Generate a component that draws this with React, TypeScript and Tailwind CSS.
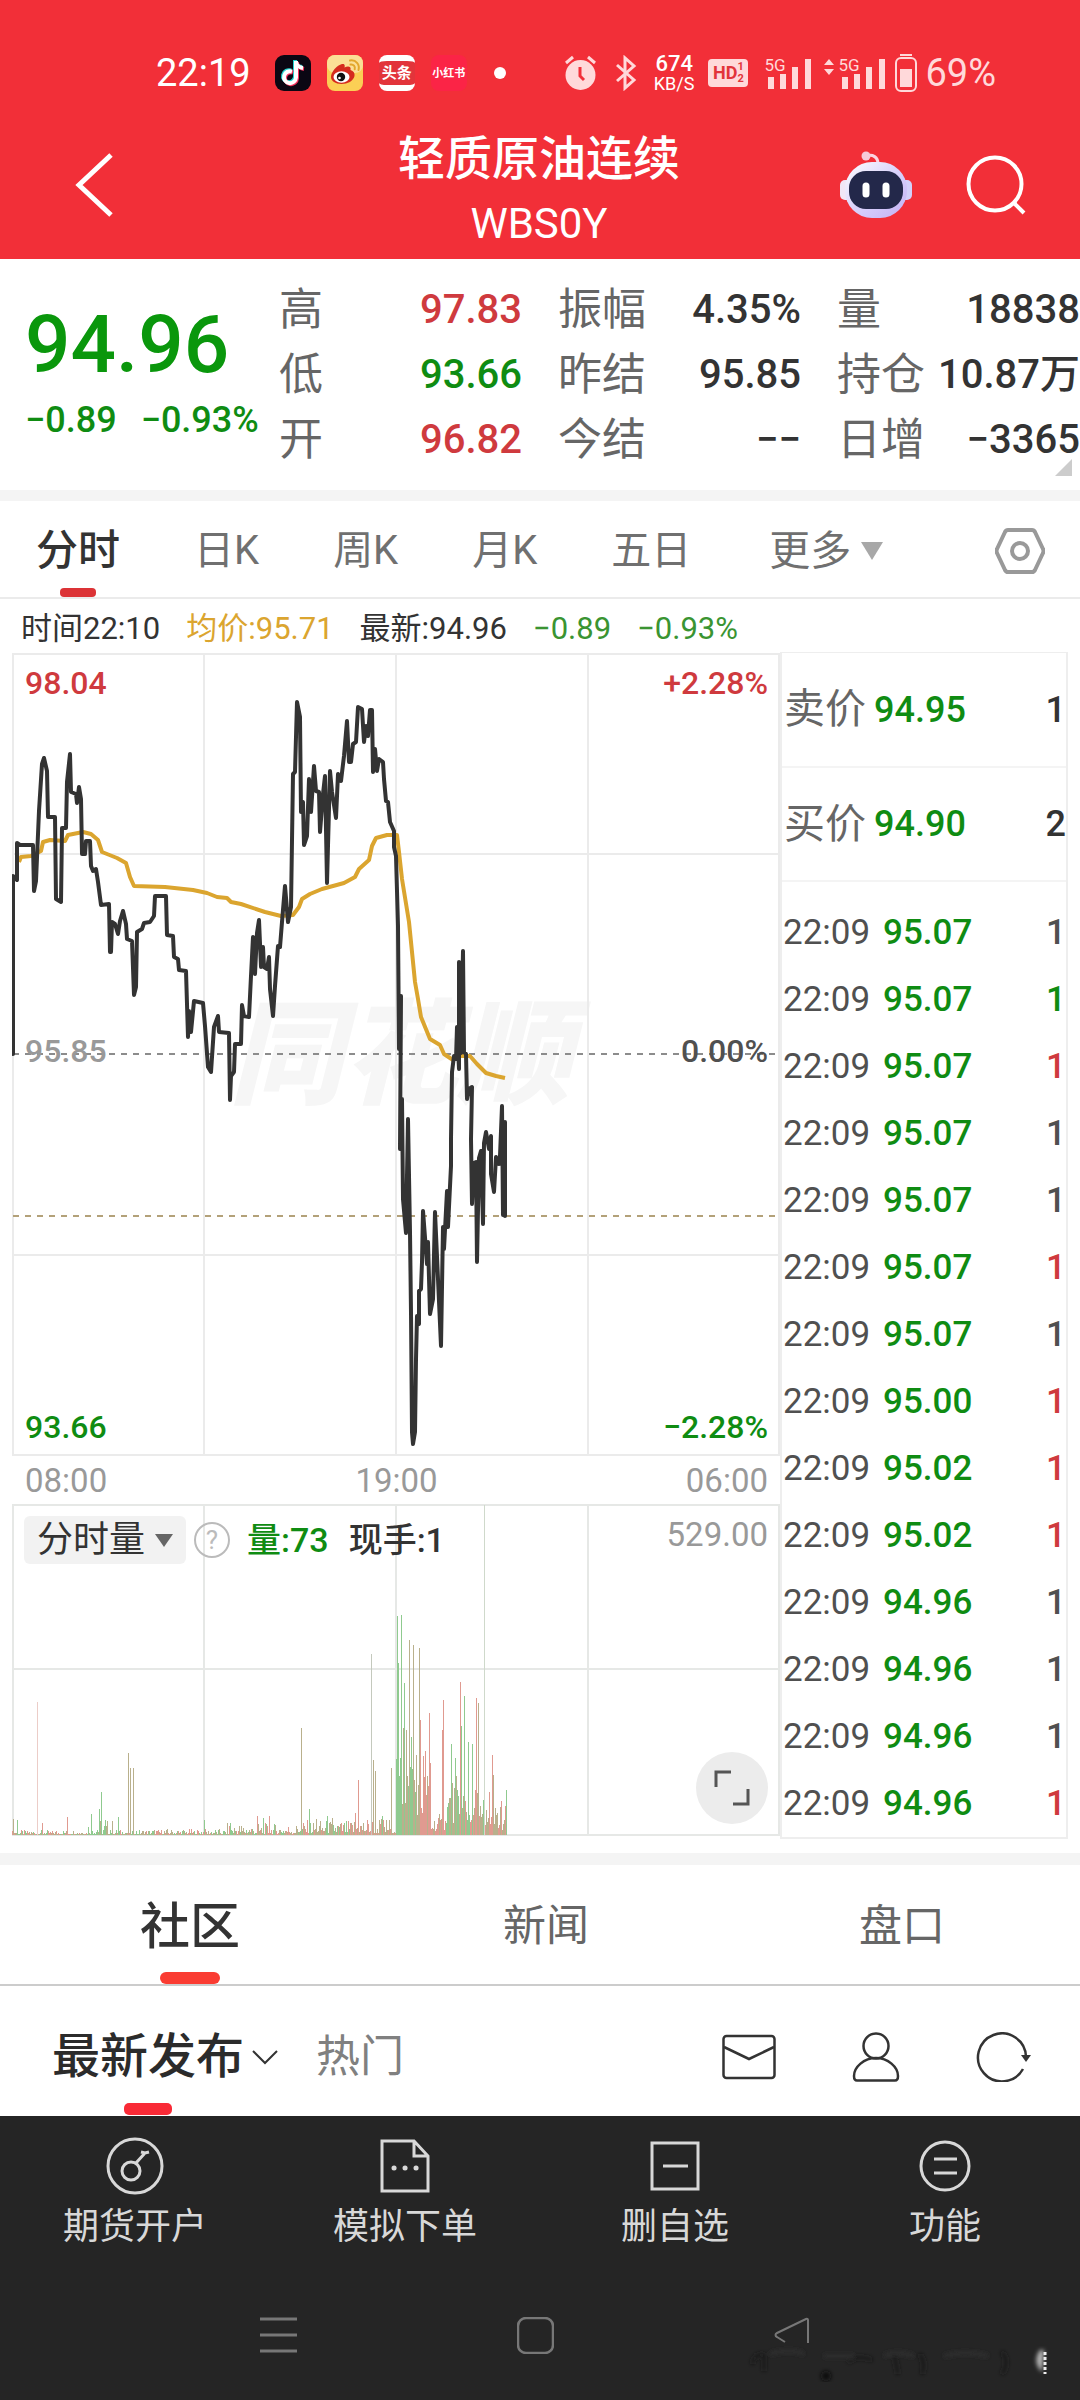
// src/pages/Quote/FuturesQuotePage.tsx

import React, { useState } from "react";

interface Stat {
  label: string;
  value: string;
  color: string;
}

interface Tick {
  time: string;
  price: string;
  volume: number;
  color: string;
}

const UP = "text-[#cf3a3e]";
const DOWN = "text-[#0f8c12]";
const FLAT = "text-[#333333]";
const GREY = "text-[#505050]";

const STATS: Stat[][] = [
  [
    { label: "高", value: "97.83", color: UP },
    { label: "低", value: "93.66", color: DOWN },
    { label: "开", value: "96.82", color: UP },
  ],
  [
    { label: "振幅", value: "4.35%", color: FLAT },
    { label: "昨结", value: "95.85", color: FLAT },
    { label: "今结", value: "−−", color: FLAT },
  ],
  [
    { label: "量", value: "18838", color: FLAT },
    { label: "持仓", value: "10.87万", color: FLAT },
    { label: "日增", value: "−3365", color: FLAT },
  ],
];

const TICKS: Tick[] = [
  { time: "22:09", price: "95.07", volume: 1, color: GREY },
  { time: "22:09", price: "95.07", volume: 1, color: DOWN },
  { time: "22:09", price: "95.07", volume: 1, color: UP },
  { time: "22:09", price: "95.07", volume: 1, color: GREY },
  { time: "22:09", price: "95.07", volume: 1, color: GREY },
  { time: "22:09", price: "95.07", volume: 1, color: UP },
  { time: "22:09", price: "95.07", volume: 1, color: GREY },
  { time: "22:09", price: "95.00", volume: 1, color: UP },
  { time: "22:09", price: "95.02", volume: 1, color: UP },
  { time: "22:09", price: "95.02", volume: 1, color: UP },
  { time: "22:09", price: "94.96", volume: 1, color: GREY },
  { time: "22:09", price: "94.96", volume: 1, color: GREY },
  { time: "22:09", price: "94.96", volume: 1, color: GREY },
  { time: "22:09", price: "94.96", volume: 1, color: UP },
];

const PERIODS = ["分时", "日K", "周K", "月K", "五日"];

const PRICE_LINE =
  "1,401 1,223 5,227 5,190 8,192 21,192 22,238 24,228 27,158 30,111 32,105 35,118 36,164 43,164 44,246 49,249 50,175 54,175 55,129 58,101 59,139 64,141 65,150 67,134 69,146 70,201 73,201 74,188 78,188 79,213 81,218 84,216 86,229 89,252 97,251 98,299 99,299 100,269 103,271 106,281 108,268 111,258 114,271 115,286 120,288 122,342 124,334 125,279 130,276 132,270 138,269 142,263 143,243 154,243 155,282 161,283 162,304 166,306 167,317 174,318 176,384 177,358 179,379 182,348 191,350 193,373 196,414 199,419 202,374 206,363 207,379 217,380 218,447 219,423 222,419 223,391 229,391 230,352 232,363 237,364 239,323 241,284 243,321 245,280 247,267 249,314 251,294 252,314 255,316 257,304 258,336 261,363 263,333 266,293 268,294 270,269 273,233 276,269 279,254 281,121 283,119 285,49 288,64 289,159 291,149 292,192 295,183 297,126 299,159 302,113 304,138 307,139 308,179 311,141 313,123 315,230 318,118 320,139 324,165 326,121 329,128 332,103 335,68 337,109 339,109 341,91 344,89 346,54 350,56 352,89 354,73 356,83 358,57 360,57 361,119 363,96 365,118 367,106 371,109 372,126 374,148 376,149 378,169 382,178 382,194 384,203 386,273 387,396 389,343 388,496 390,446 391,546 394,580 396,466 398,579 399,659 400,779 401,791 403,779 404,706 405,663 407,671 407,638 409,636 410,609 411,558 415,611 416,589 418,661 421,646 423,559 426,626 429,693 431,574 432,596 435,538 436,574 439,513 439,486 440,419 442,403 444,406 445,374 447,416 447,309 449,400 451,298 452,399 454,401 455,446 457,436 460,434 459,486 460,551 462,510 464,509 465,609 467,505 469,498 471,571 472,490 474,479 477,496 479,483 479,521 482,539 484,504 487,511 488,503 490,453 491,562 493,469 493,563";

const AVG_LINE =
  "7,209 9,204 19,203 29,198 31,189 38,187 53,188 56,182 71,179 79,181 86,187 90,199 105,205 114,210 118,224 122,233 153,234 181,237 195,240 205,244 215,245 219,249 229,251 253,259 269,263 281,262 287,254 290,246 298,241 310,236 332,230 343,224 347,216 357,207 360,193 364,185 375,182 385,182 387,199 390,226 397,269 401,309 403,329 406,346 409,364 418,386 428,392 432,401 441,407 446,403 458,403 465,411 474,420 484,423 493,425";

type Bar = [number, number, string];

const G = "#8fca8f";
const R = "#e09a90";
const T = "#b9b08c";

const SPIKES: Bar[] = [
  [1, 16, T], [5, 15, G], [25, 133, "#eccdc8"], [30, 12, R], [55, 18, R], [79, 21, G], [87, 26, G], [89, 43, G],
  [93, 15, G], [106, 18, G], [116, 82, T], [118, 67, T], [121, 67, T], [192, 15, G], [218, 12, G], [245, 19, R],
  [251, 17, G], [257, 19, R], [289, 107, T], [297, 26, G], [304, 16, T], [315, 19, G], [320, 17, T], [343, 22, R],
  [346, 55, R], [359, 181, "#c4c9bd"], [361, 75, T], [363, 64, T], [370, 19, G], [379, 67, T], [385, 219, G],
  [386, 172, G], [389, 220, G], [391, 107, T], [392, 152, G], [394, 105, T], [397, 195, T], [399, 98, G],
  [401, 190, T], [404, 80, T], [407, 187, T], [408, 115, R], [411, 79, R], [413, 84, R], [417, 122, R],
  [418, 72, R], [430, 105, R], [431, 135, R], [439, 91, G], [443, 77, G], [448, 153, R], [449, 109, G],
  [452, 139, G], [456, 93, G], [460, 91, G], [464, 137, R], [466, 132, T], [471, 35, G], [472, 330, "#cfd9cb"],
  [477, 43, R], [480, 80, R], [481, 60, T], [489, 34, R], [494, 45, G],
];

// [from, to, min height, max height, colours]
const BANDS: [number, number, number, number, string[]][] = [
  [0, 75, 1, 5, [T, R, G]],
  [75, 102, 1, 16, [G, G, T]],
  [102, 215, 1, 6, [G, R, T]],
  [215, 285, 1, 12, [R, T, G]],
  [285, 340, 2, 15, [G, T, R]],
  [340, 384, 2, 18, [T, R, T]],
  [384, 404, 28, 100, [G, T, T]],
  [404, 419, 20, 70, [R, T, R]],
  [419, 434, 4, 22, [R, R, T]],
  [434, 446, 12, 60, [G, T, T]],
  [446, 458, 12, 60, [G, T, R]],
  [458, 469, 12, 50, [R, T, T]],
  [469, 494, 4, 32, [R, T, T]],
];

const noise = (n: number) => {
  const v = Math.sin(n * 12.9898) * 43758.5453;
  return v - Math.floor(v);
};

const buildBars = (): Bar[] => {
  const bars: Bar[] = [];
  BANDS.forEach(([from, to, min, max, colors]) => {
    for (let x = from; x < to; x++) {
      const h = min + (max - min) * Math.pow(noise(x + 1), 2);
      bars.push([x, Math.round(h), colors[Math.floor(noise(x + 500) * 3)]]);
    }
  });
  return [...bars, ...SPIKES];
};

const BARS = buildBars();

const SignalBars: React.FC = () => (
  <div className="relative h-8 w-12">
    <span className="absolute left-0 top-0 text-[17px] leading-none">5G</span>
    <svg className="h-8 w-12" viewBox="0 0 48 32">
      <path d="M4 20h6v12H4zM16 17h6v15h-6zM28 10h6v22h-6zM41 2h6v30h-6z" fill="currentColor" />
    </svg>
  </div>
);

const StatusBar: React.FC = () => (
  <div className="flex items-center justify-between h-12 pl-[156px] pr-[84px]">
    <div className="flex items-center">
      <span className="text-[38px] leading-none">22:19</span>
      <svg className="ml-6 size-9" viewBox="0 0 36 36">
        <rect width="36" height="36" rx="9" fill="#0b0713" />
        <g fill="none" strokeWidth="4">
          <path d="M16 15.500a6 6 0 1 0 4 6V5c0 3.500 3 6.500 7 7" stroke="#25d4d0" />
          <path d="M18 17.500a6 6 0 1 0 4 6V7c0 3.500 3 6.500 7 7" stroke="#f5315c" />
          <path d="M17 16.500a6 6 0 1 0 4 6V6c0 3.500 3 6.500 7 7" stroke="#fff" />
        </g>
      </svg>
      <svg className="ml-4 size-9" viewBox="0 0 36 36">
        <rect width="36" height="36" rx="8" fill="#fbcf55" />
        <rect width="36" height="18" rx="8" fill="#fbdf96" />
        <path d="M4 22c0-5 6-12 11-13 3-.5 3 2 2.500 3.500 3-1.500 7-1.500 6 2.500 3 1 4.500 3 4 6-1 5-7 8-13 8S4 26 4 22Z" fill="#d52b1e" />
        <ellipse cx="14.500" cy="22" rx="8" ry="5.800" fill="#fff" />
        <circle cx="14" cy="22" r="4.200" fill="#111" />
        <circle cx="12.500" cy="23" r="1.300" fill="#fff" />
        <path d="M23 5.500c6-1 10 4 8.500 9.500M23.500 9.500c3-.5 5 2 4.200 4.800" fill="none" stroke="#e3a72c" strokeWidth="2" strokeLinecap="round" />
      </svg>
      <span className="ml-4 flex size-9 items-center justify-center overflow-hidden rounded-lg border-y-[6px] border-white bg-[#e2343b] text-[15px] font-bold leading-none">
        头条
      </span>
      <span className="ml-4 flex size-9 items-center justify-center rounded-lg bg-[#fb2446] text-[11px] font-bold leading-none">
        小红书
      </span>
      <span className="ml-[27px] size-3 rounded-full bg-white" />
    </div>
    <div className="flex items-center text-[#ffd9da]">
      <svg className="w-[33px] h-[36px]" viewBox="0 0 33 36">
        <circle cx="16.500" cy="20" r="15" fill="currentColor" />
        <path d="M2 8 9 2M24 2l7 6" stroke="currentColor" strokeWidth="3" />
        <path d="M16 12v9l4 4" fill="none" stroke="#f22f38" strokeWidth="3" />
      </svg>
      <svg className="ml-[17px] w-[24px] h-[36px]" viewBox="0 0 24 36">
        <path d="m3 10 17 15-9 8V3l9 8L3 26" fill="none" stroke="currentColor" strokeWidth="3" />
      </svg>
      <div className="ml-4 flex flex-col items-center text-white">
        <span className="text-[22px] leading-[22px] font-medium">674</span>
        <span className="text-[18px] leading-[18px]">KB/S</span>
      </div>
      <div className="ml-[14px] flex h-7 w-10 items-center justify-center rounded-[4px] bg-[#ffd9da] text-[#e2343b]">
        <span className="text-[18px] leading-none font-bold">HD</span>
        <span className="flex flex-col text-[11px] leading-[12px] font-bold">
          <span>1</span>
          <span>2</span>
        </span>
      </div>
      <div className="ml-4">
        <SignalBars />
      </div>
      <svg className="ml-3 mb-3 h-4 w-[10px]" viewBox="0 0 10 16">
        <path d="m5 0 5 6H0zM5 16l5-6H0z" fill="currentColor" />
      </svg>
      <div className="ml-1">
        <SignalBars />
      </div>
      <svg className="ml-[9px] h-10 w-[22px]" viewBox="0 0 22 40">
        <path d="M5 1h12v2H5z" fill="currentColor" />
        <rect x="1" y="5" width="20" height="33" rx="5" fill="none" stroke="currentColor" strokeWidth="2" />
        <rect x="5" y="16" width="12" height="18" fill="currentColor" />
      </svg>
      <span className="ml-2 text-[38px] leading-none">69%</span>
    </div>
  </div>
);

const Header: React.FC = () => (
  <header className="bg-[#f22f38] pt-[49px] pb-2 text-white">
    <StatusBar />
    <div className="mt-[32px] flex items-center justify-between pl-[75px] pr-[54px]">
      <button aria-label="返回" className="w-[163px] pb-[10px]">
        <svg className="h-[66px] w-[38px]" viewBox="0 0 38 66">
          <path d="M36 3 4 33l32 30" fill="none" stroke="currentColor" strokeWidth="5" />
        </svg>
      </button>
      <div className="flex flex-col items-center">
        <h1 className="text-[47px] leading-[60px] font-medium">轻质原油连续</h1>
        <p className="mt-2 text-[42px] leading-[54px]">WBS0Y</p>
      </div>
      <div className="flex items-center gap-[54px] pb-[10px]">
        <button aria-label="智能助手">
          <svg className="h-[68px] w-[72px]" viewBox="0 0 72 68">
            <defs>
              <linearGradient id="shell" x1="0" y1="0" x2="1" y2="1">
                <stop offset="0" stopColor="#fff" />
                <stop offset="0.5" stopColor="#d9d2fb" />
                <stop offset="1" stopColor="#c3b0f5" />
              </linearGradient>
            </defs>
            <path d="M26 5c7-2 12 1 12 8" fill="none" stroke="#fbd5e2" strokeWidth="3" />
            <circle cx="26" cy="5" r="4.500" fill="#f6cadb" />
            <rect x="0" y="29" width="12" height="20" rx="5" fill="#f1e6f6" />
            <rect x="60" y="29" width="12" height="20" rx="5" fill="#d3d0fa" />
            <rect x="5" y="11" width="62" height="56" rx="27" fill="url(#shell)" />
            <rect x="9" y="20" width="54" height="38" rx="17" fill="#23284a" />
            <path d="M26 35v8M46 35v8" stroke="#fff" strokeWidth="7" strokeLinecap="round" />
          </svg>
        </button>
        <button aria-label="搜索">
          <svg className="h-[60px] w-[60px]" viewBox="0 0 60 60">
            <circle cx="29" cy="29" r="26.500" fill="none" stroke="currentColor" strokeWidth="4" />
            <path d="m47 47 11 11" stroke="currentColor" strokeWidth="4" />
          </svg>
        </button>
      </div>
    </div>
  </header>
);

const Summary: React.FC = () => (
  <section className="relative flex pt-[18px] pb-[18px]">
    <div className="w-[279px] pl-[25px] pt-8">
      <p className="text-[80px] leading-[72px] font-medium text-[#0a970c]">94.96</p>
      <p className={`mt-[17px] flex gap-6 text-[36px] leading-[44px] font-medium whitespace-nowrap ${DOWN}`}>
        <span>−0.89</span>
        <span>−0.93%</span>
      </p>
    </div>
    <div className="grid flex-1 grid-cols-3 gap-x-9">
      {STATS.map((column) => (
        <dl key={column[0].label}>
          {column.map((s) => (
            <div key={s.label} className="flex h-[65px] items-center justify-between">
              <dt className="text-[44px] leading-none text-[#666666]">{s.label}</dt>
              <dd className={`text-[40px] leading-none font-medium whitespace-nowrap ${s.color}`}>{s.value}</dd>
            </div>
          ))}
        </dl>
      ))}
    </div>
    <svg className="absolute right-2 bottom-[14px] size-[17px]" viewBox="0 0 17 17">
      <path d="M17 0v17H0z" fill="#cccccc" />
    </svg>
  </section>
);

const PriceChart: React.FC = () => (
  <div className="relative">
    <svg className="block h-[803px] w-full" viewBox="0 0 768 803" preserveAspectRatio="none">
      <text x="217" y="442" fontSize="114" fontWeight="900" fontStyle="italic" fill="#f6f6f6">
        同花顺
      </text>
      <path d="M1 1H767V802H1ZM192 1V802M384 1V802M576 1V802M1 201H767M1 602H767" fill="none" stroke="#ebebeb" strokeWidth="2" />
      <path d="M1 401H764" stroke="#8c8c8c" strokeWidth="2" strokeDasharray="6 6" />
      <path d="M1 563H764" stroke="#b3a179" strokeWidth="2" strokeDasharray="6 6" />
      <polyline points={AVG_LINE} fill="none" stroke="#dba52f" strokeWidth="4" strokeLinejoin="round" />
      <polyline points={PRICE_LINE} fill="none" stroke="#333333" strokeWidth="4" strokeLinejoin="round" strokeLinecap="round" />
    </svg>
    <div className="absolute inset-0 flex flex-col justify-between pt-[10px] pb-[9px] pl-[13px] pr-3 text-[32px] leading-[40px] font-medium">
      <div className="flex justify-between">
        <span className={UP}>98.04</span>
        <span className={UP}>+2.28%</span>
      </div>
      <div className="flex justify-between pb-2">
        <span className="text-[#999999]">95.85</span>
        <span className={GREY}>0.00%</span>
      </div>
      <div className="flex justify-between">
        <span className={DOWN}>93.66</span>
        <span className={DOWN}>−2.28%</span>
      </div>
    </div>
  </div>
);

const VolumeChart: React.FC = () => (
  <div className="relative">
    <svg className="block h-[332px] w-full" viewBox="0 0 768 332" preserveAspectRatio="none">
      <path d="M1 1H767V331H1ZM192 1V331M384 1V331M576 1V331M1 165H767" fill="none" stroke="#e6e8e6" strokeWidth="2" />
      {BARS.map(([x, h, color], i) => (
        <rect key={i} x={x} y={331 - h} width="1" height={h} fill={color} />
      ))}
    </svg>
    <div className="absolute inset-x-3 top-3 flex items-center">
      <button className="flex h-12 items-center gap-[10px] rounded-md bg-[#f2f2f2] px-[13px] text-[36px] text-[#333333]">
        分时量
        <svg className="h-[13px] w-[18px]" viewBox="0 0 18 13">
          <path d="M0 0h18L9 13z" fill="#666666" />
        </svg>
      </button>
      <button
        aria-label="说明"
        className="ml-2 flex size-9 items-center justify-center rounded-full border-2 border-[#bbbbbb] text-[26px] leading-none text-[#bbbbbb]"
      >
        ?
      </button>
      <span className={`ml-[17px] text-[34px] leading-none font-medium ${DOWN}`}>量:73</span>
      <span className="ml-5 text-[34px] leading-none font-medium text-[#333333]">现手:1</span>
      <span className="ml-auto self-start text-[33px] leading-[38px] text-[#999999]">529.00</span>
    </div>
    <button
      aria-label="全屏"
      className="absolute right-3 bottom-3 flex size-[72px] items-center justify-center rounded-full bg-[#ececec]"
    >
      <svg className="size-9" viewBox="0 0 36 36">
        <path d="M2 17V2h15M34 19v15H19" fill="none" stroke="#555555" strokeWidth="3" />
      </svg>
    </button>
  </div>
);

const OrderPanel: React.FC = () => (
  <div className="w-[288px] border-2 border-t border-[#eeeeee]">
    <table className="w-full table-fixed">
      <tbody>
        {[
          { label: "卖价", price: "94.95", volume: 1 },
          { label: "买价", price: "94.90", volume: 2 },
        ].map((row) => (
          <tr key={row.label} className="h-[114px] border-b-2 border-[#f4f4f4]">
            <th className="w-[92px] pl-[2px] text-left text-[41px] leading-none font-normal text-[#666666]">{row.label}</th>
            <td className={`text-[36px] leading-none font-medium ${DOWN}`}>{row.price}</td>
            <td className="w-10 text-right text-[36px] leading-none font-medium text-[#333333]">{row.volume}</td>
          </tr>
        ))}
      </tbody>
    </table>
    <table className="mt-[17px] w-full table-fixed text-[35px] leading-none">
      <tbody>
        {TICKS.map((t, i) => (
          <tr key={i} className="h-[67px]">
            <td className={`w-[101px] pl-px ${GREY}`}>{t.time}</td>
            <td className={`font-medium ${DOWN}`}>{t.price}</td>
            <td className={`w-10 text-right font-medium ${t.color}`}>{t.volume}</td>
          </tr>
        ))}
      </tbody>
    </table>
  </div>
);

const FeedBar: React.FC = () => (
  <div className="flex h-[130px] items-center pt-3 pl-[52px] pr-[48px]">
    <button className="relative flex h-full items-center text-[48px] leading-none font-medium text-[#2b2b2b]">
      最新发布
      <span className="absolute bottom-px left-1/2 h-3 w-12 -translate-x-1/2 rounded-[5px] bg-[#f92a36]" />
    </button>
    <svg className="ml-2 h-[15px] w-[26px]" viewBox="0 0 26 15">
      <path d="m1 1 12 12L25 1" fill="none" stroke="#333333" strokeWidth="2" />
    </svg>
    <button className="ml-[38px] text-[44px] leading-none text-[#808080]">热门</button>
    <div className="ml-auto flex items-center gap-[76px] text-[#333333]">
      <button aria-label="消息">
        <svg className="h-[50px] w-[54px]" viewBox="0 0 54 50" fill="none" stroke="currentColor" strokeWidth="2.500">
          <rect x="1.500" y="4" width="51" height="42" rx="3" />
          <path d="m2 15 25 12 25-12" />
        </svg>
      </button>
      <button aria-label="我的">
        <svg className="h-[50px] w-[48px]" viewBox="0 0 48 50" fill="none" stroke="currentColor" strokeWidth="2.500">
          <circle cx="24" cy="14" r="12.500" />
          <path d="M24 26c12 0 22 9 22 18 0 3-1 4.500-3 4.500H5c-2 0-3-1.500-3-4.500 0-9 10-18 22-18Z" />
        </svg>
      </button>
      <button aria-label="刷新">
        <svg className="h-[50px] w-[56px]" viewBox="0 0 56 50">
          <path d="M47 37A24 24 0 1 1 50 25" fill="none" stroke="currentColor" strokeWidth="2.500" />
          <path d="M45 23h10l-5 7z" fill="currentColor" />
        </svg>
      </button>
    </div>
  </div>
);

const ACTIONS: { label: string; icon: React.ReactNode }[] = [
  {
    label: "期货开户",
    icon: (
      <>
        <circle cx="29" cy="29" r="27" />
        <circle cx="25" cy="34" r="9" />
        <path d="m30 26 9-10M35 15l4 1 4-1" />
      </>
    ),
  },
  {
    label: "模拟下单",
    icon: (
      <>
        <path d="M6 4h32l14 15v35H6ZM38 4v15h14" />
        <path d="M18 31h.1M29 31h.1M40 31h.1" strokeWidth="5" strokeLinecap="round" />
      </>
    ),
  },
  {
    label: "删自选",
    icon: (
      <>
        <rect x="6" y="6" width="46" height="46" />
        <path d="M17 29h25" />
      </>
    ),
  },
  {
    label: "功能",
    icon: (
      <>
        <circle cx="29" cy="29" r="24" />
        <path d="M18 22h23M18 36h23" />
      </>
    ),
  },
];

const BottomBar: React.FC = () => (
  <footer className="bg-[#252525] pt-[21px] pb-12">
    <nav className="grid grid-cols-4">
      {ACTIONS.map((a) => (
        <button key={a.label} className="flex flex-col items-center text-[#d8d8d8]">
          <svg className="size-[58px]" viewBox="0 0 58 58" fill="none" stroke="currentColor" strokeWidth="3">
            {a.icon}
          </svg>
          <span className="mt-2 text-[36px] leading-[48px]">{a.label}</span>
        </button>
      ))}
    </nav>
    <div className="relative mt-[66px] flex justify-center gap-[220px] pr-[10px] text-[#777777]">
      <button aria-label="最近任务">
        <svg className="size-[37px]" viewBox="0 0 37 37">
          <path d="M0 2h37M0 18h37M0 34h37" stroke="currentColor" strokeWidth="3" />
        </svg>
      </button>
      <button aria-label="主页">
        <svg className="size-[37px]" viewBox="0 0 37 37">
          <rect x="1" y="1" width="35" height="35" rx="8" fill="none" stroke="currentColor" strokeWidth="2.500" />
        </svg>
      </button>
      <button aria-label="后退">
        <svg className="size-[37px]" viewBox="0 0 37 37">
          <path d="M11 25 3 20c-2-1-2-3 0-4L32 2c1-.5 2 0 2 1v23" fill="none" stroke="currentColor" strokeWidth="2" />
        </svg>
      </button>
      <svg className="absolute right-6 -bottom-7 h-[40px] w-[312px]" viewBox="0 0 312 40">
        <defs>
          <filter id="smudge">
            <feGaussianBlur stdDeviation="2" />
          </filter>
        </defs>
        <g filter="url(#smudge)" strokeWidth="3">
          <path d="M8 22q4-12 12-9v16M104 20q10-8 24-2M150 12l4 20M176 12q6 10 2 20M258 10q8 10 0 22" fill="none" stroke="#1a1a1a" />
          <path d="M26 12q20-6 34 0M80 14h30M140 14q12-6 30 0M200 14q20-6 44 0" fill="none" stroke="#303030" />
          <circle cx="82" cy="34" r="5" fill="#0e0e0e" />
          <path d="M296 8q-8 12 2 22l2-22z" fill="#bbbbbb" />
        </g>
        <path d="M301 10v22" stroke="#eeeeee" strokeWidth="3" strokeDasharray="3 2" />
      </svg>
    </div>
  </footer>
);

const FuturesQuotePage: React.FC = () => {
  const [period, setPeriod] = useState("分时");
  const [section, setSection] = useState("社区");

  return (
    <div className="min-h-screen bg-white text-[#333333] [font-family:Roboto,'Noto_Sans_CJK_SC',sans-serif]">
      <Header />
      <Summary />

      <div className="h-[11px] bg-[#f4f4f4]" />

      <div className="flex h-[98px] items-center gap-[74px] border-b-2 border-[#ebebeb] pt-1 pl-9 pr-[35px]">
        {PERIODS.map((p) => (
          <button
            key={p}
            onClick={() => setPeriod(p)}
            className={
              p === period
                ? "relative flex h-full items-center text-[42px] leading-none font-medium text-[#333333]"
                : "relative flex h-full items-center text-[40px] leading-none text-[#707070]"
            }
          >
            {p}
            {p === period && (
              <span className="absolute bottom-0 left-1/2 h-[9px] w-9 -translate-x-1/2 rounded-[4px] bg-[#dc3336]" />
            )}
          </button>
        ))}
        <button className="ml-1 flex items-center gap-[10px] text-[41px] leading-none text-[#707070]">
          更多
          <svg className="h-[18px] w-[22px]" viewBox="0 0 22 18">
            <path d="M0 0h22L11 18z" fill="#a8a8a8" />
          </svg>
        </button>
        <button aria-label="设置" className="ml-auto">
          <svg className="h-[46px] w-[50px]" viewBox="0 0 50 46" fill="none" stroke="#999999" strokeWidth="4">
            <path d="M13 2h24q2 0 3 2l8 17q1 2 0 4l-8 17q-1 2-3 2H13q-2 0-3-2L2 25q-1-2 0-4L10 4q1-2 3-2Z" />
            <circle cx="25" cy="23" r="8" />
          </svg>
        </button>
      </div>

      <div className="flex h-[53px] items-center gap-[26px] pt-[6px] pl-[21px] text-[31px] leading-none">
        <span>时间22:10</span>
        <span className="text-[#dba52f]">均价:95.71</span>
        <span>最新:94.96</span>
        <span className="text-[#3a9432]">−0.89</span>
        <span className="text-[#3a9432]">−0.93%</span>
      </div>

      <main className="flex px-3 pb-[14px]">
        <div className="min-w-0 flex-1 pt-px">
          <PriceChart />
          <div className="flex h-[48px] items-center justify-between pl-[13px] pr-3 text-[33px] leading-none text-[#999999]">
            <span>08:00</span>
            <span>19:00</span>
            <span>06:00</span>
          </div>
          <VolumeChart />
        </div>
        <OrderPanel />
      </main>

      <div className="h-3 bg-[#f4f4f4]" />

      <div className="grid h-[121px] grid-cols-3 border-b-2 border-[#cccccc] pl-3">
        {["社区", "新闻", "盘口"].map((s) => (
          <button
            key={s}
            onClick={() => setSection(s)}
            className={
              s === section
                ? "relative pt-1 text-[50px] leading-none font-medium text-[#333333]"
                : "relative pt-1 text-[43px] leading-none text-[#666666]"
            }
          >
            {s}
            {s === section && (
              <span className="absolute bottom-0 left-1/2 h-3 w-[60px] -translate-x-1/2 rounded-[6px] bg-[#fa3c32]" />
            )}
          </button>
        ))}
      </div>

      <FeedBar />
      <BottomBar />
    </div>
  );
};

export default FuturesQuotePage;
